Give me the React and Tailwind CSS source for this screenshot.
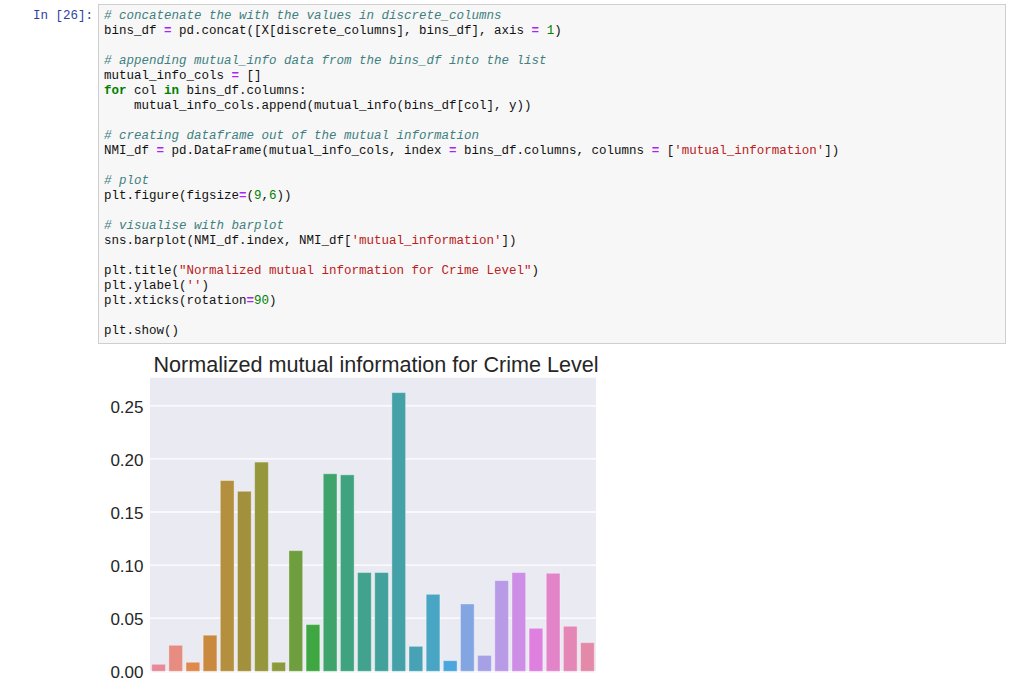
const C = 'italic text-[#408080]';
const K = 'font-bold text-[#008000]';
const O = 'font-bold text-[#AA22FF]';
const N = 'text-[#008000]';
const S = 'text-[#BA2121]';

const lines = [
  [[C, '# concatenate the with the values in discrete_columns']],
  [['', 'bins_df '], [O, '='], ['', ' pd.concat([X[discrete_columns], bins_df], axis '], [O, '='], ['', ' '], [N, '1'], ['', ')']],
  [],
  [[C, '# appending mutual_info data from the bins_df into the list']],
  [['', 'mutual_info_cols '], [O, '='], ['', ' []']],
  [[K, 'for'], ['', ' col '], [K, 'in'], ['', ' bins_df.columns:']],
  [['', '    mutual_info_cols.append(mutual_info(bins_df[col], y))']],
  [],
  [[C, '# creating dataframe out of the mutual information']],
  [['', 'NMI_df '], [O, '='], ['', ' pd.DataFrame(mutual_info_cols, index '], [O, '='], ['', ' bins_df.columns, columns '], [O, '='], ['', ' ['], [S, "'mutual_information'"], ['', '])']],
  [],
  [[C, '# plot']],
  [['', 'plt.figure(figsize'], [O, '='], ['', '('], [N, '9'], ['', ','], [N, '6'], ['', '))']],
  [],
  [[C, '# visualise with barplot']],
  [['', 'sns.barplot(NMI_df.index, NMI_df['], [S, "'mutual_information'"], ['', '])']],
  [],
  [['', 'plt.title('], [S, '"Normalized mutual information for Crime Level"'], ['', ')']],
  [['', 'plt.ylabel('], [S, "''"], ['', ')']],
  [['', 'plt.xticks(rotation'], [O, '='], [N, '90'], ['', ')']],
  [],
  [['', 'plt.show()']],
];

const bars = [
  [0.0066, '#e68a9a'], [0.0245, '#e68c80'], [0.0085, '#e0894f'], [0.034, '#c9893f'],
  [0.1796, '#b38f3e'], [0.1695, '#a3903d'], [0.197, '#96963c'], [0.0085, '#8d9a3c'],
  [0.1136, '#6f9e3e'], [0.044, '#3fa742'], [0.186, '#3ea46b'], [0.185, '#3fa37f'],
  [0.093, '#41a38e'], [0.093, '#42a29b'], [0.2624, '#43a1a7'], [0.0235, '#46a2b4'],
  [0.0725, '#49a5c4'], [0.010, '#4aa6dc'], [0.0634, '#83a6e3'], [0.015, '#a6a1e6'],
  [0.0854, '#b89ae6'], [0.093, '#ce8ee6'], [0.0405, '#df80e0'], [0.0923, '#e384c8'],
  [0.0424, '#e487b7'], [0.027, '#e48aa9'],
];

function Chart() {
  const left = 150, right = 596, top = 377.7, y0 = 671.3, k = 1062;
  const slot = (right - left) / bars.length;
  const ticks = [0, 0.05, 0.1, 0.15, 0.2, 0.25];
  return (
    <svg width="530" height="335" className="block ml-[98px]">
      <g transform="translate(-98,-344)" fontFamily="'Liberation Sans', Arial, sans-serif">
        <text x="376" y="372" textAnchor="middle" fontSize="21.6" fill="#262626">
          Normalized mutual information for Crime Level
        </text>
        <rect x={left} y={top} width={right - left} height={y0 - top + 1} fill="#eaeaf2" />
        {ticks.map((t) => {
          const y = y0 - t * k;
          return (
            <g key={t}>
              <line x1={left} x2={right} y1={y} y2={y} stroke="#fff" strokeWidth="1.3" />
              <text x="143.5" y={y + 7} textAnchor="end" fontSize="17" fill="#262626">
                {t.toFixed(2)}
              </text>
            </g>
          );
        })}
        {bars.map(([v, c], i) => {
          const h = v * k;
          return (
            <rect
              key={i}
              x={left + slot * i + slot * 0.1}
              y={y0 - h}
              width={slot * 0.8}
              height={h}
              fill={c}
              stroke="#ffffff"
              strokeOpacity="0.35"
              strokeWidth="1"
            />
          );
        })}
      </g>
    </svg>
  );
}

export default function App() {
  return (
    <div className="bg-white w-[1026px] h-[679px] overflow-hidden pt-[4px]">
      <div className="flex">
        <div className="w-[98px] pr-[5px] text-right pt-[5px] text-[12.5px] leading-[15px] text-[#303F9F] font-['Liberation_Mono',monospace] whitespace-pre">
          In [26]:
        </div>
        <div className="w-[908px] border border-[#cfcfcf] bg-[#f7f7f7] px-[5px] pt-[4px] pb-[4px] text-[12.5px] leading-[15px] text-[#111] font-['Liberation_Mono',monospace]">
          {lines.map((ln, i) => (
            <div key={i} className="whitespace-pre h-[15px]">
              {ln.map(([cls, txt], j) => (
                <span key={j} className={cls}>{txt}</span>
              ))}
            </div>
          ))}
        </div>
      </div>
      <Chart />
    </div>
  );
}
